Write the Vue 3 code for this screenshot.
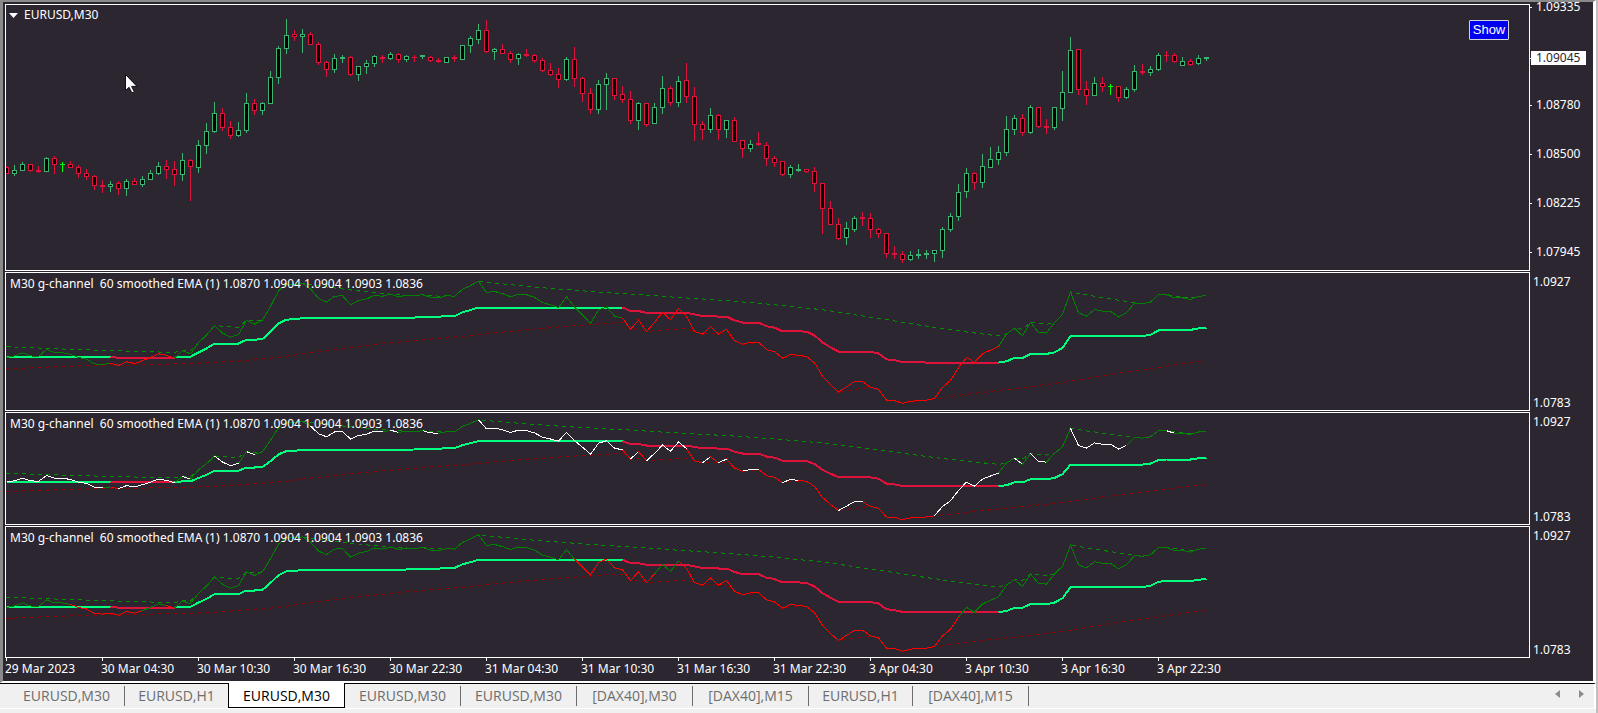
<script setup>
import { ref } from 'vue'

const STEP = 8

// kind (g rise, r fall, d doji), high, body top, body bottom, low
const raw = `r166,167,174,174 g165,170,174,176 g162,164,171,171 r164,164,171,172 r166,170,172,173 g157,158,172,172 r156,158,165,174 d162,164,165,172 r161,164,168,168 r165,167,174,178
r169,173,177,180 r175,176,186,190 r180,185,187,193 g181,184,187,192 r181,183,189,195 g179,181,189,196 r178,181,185,185 g176,179,185,187 g170,173,180,180 g162,166,174,175
r160,166,170,179 r161,169,175,186 g153,160,175,181 r159,160,167,201 g140,145,168,173 g123,131,146,154 g102,113,132,133 r108,113,128,131 r121,127,136,139 g122,130,136,137
g93,103,131,133 r99,103,111,115 g102,103,111,115 g71,77,104,104 g46,48,78,84 g19,35,49,54 r30,34,37,41 g29,34,37,53 r32,34,45,45 r42,44,63,65
r61,62,70,77 g54,58,70,73 g55,57,59,63 r56,57,75,76 g66,66,75,81 g60,63,67,74 g55,56,64,67 r55,57,59,63 g52,54,59,60 r53,54,60,63
g55,56,60,62 r55,57,58,62 g55,55,57,59 r56,57,61,62 r58,60,62,63 g57,57,63,63 r55,57,59,62 g45,45,60,60 g36,38,46,53 g24,30,40,44
r20,30,52,53 g48,49,52,60 r44,49,54,54 r51,53,60,63 g53,54,59,65 r49,54,56,57 r54,55,61,63 r58,60,71,72 r63,70,75,76 r68,74,80,88
g57,59,80,81 r47,59,79,87 r77,78,94,102 r88,93,110,114 g80,84,110,114 g73,78,85,110 r78,78,96,100 r86,94,100,103 r91,99,121,124 g102,103,121,130
r103,103,125,127 g103,107,124,124 g76,88,108,114 r86,88,103,106 g76,81,103,107 r63,80,97,103 r87,96,125,141 r121,124,130,140 g108,115,130,133 r114,115,130,140
g120,120,130,138 r117,120,142,142 r140,140,149,158 g140,144,149,152 r132,143,145,146 r142,145,159,166 r156,158,163,167 r161,161,175,176 g165,167,175,178 g164,169,171,172
r169,169,172,173 r167,171,184,192 r183,183,209,234 r201,208,225,225 r218,224,239,240 g222,228,238,245 g216,218,230,232 r212,217,219,226 r213,218,230,238 r228,229,234,238
r233,233,254,258 r246,253,255,259 r251,254,260,263 g251,255,260,261 g249,254,256,259 g250,253,255,259 g250,250,254,262 g227,229,251,258 g213,216,230,232 g184,192,217,221
g168,173,192,198 r172,173,183,190 g154,166,183,188 g147,159,168,168 g146,152,160,165 g116,129,153,156 g115,118,130,135 r114,118,133,136 g105,107,133,134 r107,107,127,128
r119,126,128,134 g107,107,128,130 g71,92,109,121 g37,50,93,93 r49,49,90,95 r81,89,96,105 g77,83,96,96 r77,83,87,92 d84,86,87,95 r86,86,98,102
g87,89,98,99 g65,71,90,92 r64,71,73,75 g66,69,73,76 g53,55,70,71 r51,55,56,62 r53,55,62,63 g57,61,66,66 r59,61,65,66 g55,58,64,65
g57,57,59,61`

const candles = raw.trim().split(/\s+/).map((s, i) => {
  const [high, top, bottom, low] = s.slice(1).split(',').map((v) => Number(v) - 5)
  return { kind: s[0], high, top, bottom, low, x: i * STEP }
})

// G-channel of the closing prices, length 60, in units of the price chart
const closes = candles.map((c) => (c.kind === 'r' ? c.bottom + 4 : c.top + 5))
const upper = []
const lower = []
let up = 152.5
let lo = 194.5
closes.forEach((c, i) => {
  if (i > 0) {
    const gap = (lo - up) / 60
    up = Math.min(c, up + gap)
    lo = Math.max(c, lo - gap)
  }
  upper.push(up)
  lower.push(lo)
})
const middle = upper.map((u, i) => (u + lower[i]) / 2 - 1)

const midRuns = [['up', 0, 13], ['down', 13, 21], ['up', 21, 77], ['down', 77, 124], ['up', 124, 150]]
const srcRuns = [['rise', 0, 13], ['fall', 13, 21], ['rise', 21, 77], ['fall', 77, 124], ['rise', 124, 150]]
const srcRunsMid = [['rise', 0, 8], ['fall', 8, 17], ['rise', 17, 20], ['fall', 20, 21], ['rise', 21, 71], ['fall', 71, 81], ['rise', 81, 84], ['fall', 84, 119], ['rise', 119, 150]]
const idle = [[0, 12], [14, 21], [22, 23], [26, 29], [30, 31], [38, 47], [48, 49], [52, 54], [59, 77], [78, 79], [80, 85], [87, 88], [89, 90], [92, 94], [97, 99], [104, 107], [116, 124], [126, 127], [128, 130], [133, 140], [145, 146]]
  .map(([a, b]) => ['idle', a, b])

const panels = [
  { id: 'tall', base: 19, scale: 0.5327, runs: srcRuns },
  { id: 'short', base: 15.5, scale: 0.436, runs: [...srcRuns, ...idle] },
  { id: 'last', base: 18, scale: 0.508, runs: srcRunsMid },
].map((p) => {
  const line = (values, a, b) => {
    const pts = []
    for (let i = a; i <= b; i++) pts.push(`${i * STEP + 0.5},${(p.base + (values[i] - 50) * p.scale).toFixed(1)}`)
    return pts.join(' ')
  }
  return {
    id: p.id,
    upper: line(upper, 0, 150),
    lower: line(lower, 0, 150),
    mid: midRuns.map(([c, a, b]) => ({ c, pts: line(middle, a, b) })),
    src: p.runs.map(([c, a, b]) => ({ c, pts: line(closes, a, b) })),
  }
})

const caption = 'M30 g-channel  60 smoothed EMA (1) 1.0870 1.0904 1.0904 1.0903 1.0836'
const prices = ['1.09335', '1.09045', '1.08780', '1.08500', '1.08225', '1.07945']
const times = ['29 Mar 2023', '30 Mar 04:30', '30 Mar 10:30', '30 Mar 16:30', '30 Mar 22:30', '31 Mar 04:30', '31 Mar 10:30', '31 Mar 16:30', '31 Mar 22:30', '3 Apr 04:30', '3 Apr 10:30', '3 Apr 16:30', '3 Apr 22:30']
const tabs = ['EURUSD,M30', 'EURUSD,H1', 'EURUSD,M30', 'EURUSD,M30', 'EURUSD,M30', '[DAX40],M30', '[DAX40],M15', 'EURUSD,H1', '[DAX40],M15']
const active = ref(2)
</script>

<template>
  <main class="terminal">
    <div class="window">
      <section class="row">
        <div class="plot">
          <svg class="canvas price" aria-label="EURUSD price chart">
            <g v-for="c in candles" :key="c.x" :class="c.kind">
              <rect class="solid" :x="c.x" :y="c.high" width="1" :height="c.low - c.high" />
              <rect class="solid" :x="c.x - 2" :y="c.top" width="5" :height="c.bottom - c.top" />
              <rect v-if="c.bottom - c.top > 2" class="hollow" :x="c.x - 1" :y="c.top + 1" width="3" :height="c.bottom - c.top - 2" />
            </g>
          </svg>
          <button class="symbol" type="button">
            <svg width="9" height="5" aria-hidden="true"><path d="M0 0h9L4.5 5z" fill="#fff" /></svg>
            EURUSD,M30
          </button>
          <button class="show" type="button">Show</button>
          <svg class="pointer" width="13" height="20" viewBox="0 0 13 20" aria-hidden="true">
            <path d="M.5 .5v16l3.6-3.2 2.8 5.6 2.4-1.2-2.7-5.3H12z" fill="#fff" stroke="#100c18" />
          </svg>
        </div>
        <ol class="scale prices">
          <li v-for="p in prices" :key="p" :class="{ current: p === '1.09045' }"><span>{{ p }}</span></li>
        </ol>
      </section>

      <section v-for="p in panels" :key="p.id" class="row">
        <div class="plot">
          <svg class="canvas" :class="p.id" aria-label="g-channel indicator">
            <polyline class="upper" :points="p.upper" />
            <polyline class="lower" :points="p.lower" />
            <polyline v-for="(m, i) in p.mid" :key="'m' + i" :class="['mid', m.c]" :points="m.pts" />
            <polyline v-for="(s, i) in p.src" :key="'s' + i" :class="s.c" :points="s.pts" />
          </svg>
          <p class="caption">{{ caption }}</p>
        </div>
        <ol class="scale bounds">
          <li>1.0927</li>
          <li>1.0783</li>
        </ol>
      </section>

      <ol class="times">
        <li v-for="t in times" :key="t">{{ t }}</li>
      </ol>
    </div>

    <nav class="tabs" aria-label="Charts">
      <button
        v-for="(t, i) in tabs"
        :key="i"
        type="button"
        :class="{ active: i === active, before: i === active - 1, hourly: t.endsWith('H1') }"
        @click="active = i"
      ><span>{{ t }}</span></button>
      <div class="arrows">
        <button type="button" aria-label="Scroll left"><svg width="5" height="8"><path d="M5 0v8L0 4z" fill="#8c8c8c" /></svg></button>
        <button type="button" aria-label="Scroll right"><svg width="5" height="8"><path d="M0 0v8l5-4z" fill="#8c8c8c" /></svg></button>
      </div>
    </nav>
  </main>
</template>

<style>
body {
  margin: 0;
  background: #f0f0f0;
}
</style>

<style scoped>
.terminal {
  box-sizing: border-box;
  min-height: 100vh;
  overflow: hidden;
  border-right: 2px solid #c0c0c0;
  background: #f0f0f0;
  font-family: "Noto Sans", "Open Sans", sans-serif;
}
button {
  padding: 0;
  border: 0;
  background: none;
  font: inherit;
  color: inherit;
  text-align: left;
}
ol {
  list-style: none;
  margin: 0;
  padding: 0;
}
.window {
  display: flex;
  flex-direction: column;
  gap: 1px;
  padding: 2px 0 0 2px;
  border-top: 2px solid #8a8a8a;
  border-left: 3px solid #8a8a8a;
  border-right: 3px solid #fff;
  border-bottom: 2px solid #fff;
  background: #2c2630;
  color: #fff;
  font-size: 12px;
  line-height: 14px;
}
.row {
  display: grid;
  grid-template-columns: minmax(0, 1fr) 63px;
}
.plot {
  position: relative;
  border: 1px solid #fff;
}
.canvas {
  display: block;
  width: 100%;
  shape-rendering: crispEdges;
}
.price { height: 265px; }
.tall { height: 137px; }
.short { height: 111px; }
.last { height: 130px; }

.g .solid { fill: #3cb371; }
.r .solid { fill: #dc143c; }
.d .solid { fill: #00ff00; }
.hollow { fill: #000; }

polyline {
  fill: none;
  stroke-width: 1px;
}
.upper { stroke: #009000; stroke-dasharray: 4 4; }
.lower { stroke: #8b0000; stroke-dasharray: 4 4; }
.mid { stroke-width: 2px; }
.up { stroke: #00ff7f; }
.down { stroke: #dc143c; }
.rise { stroke: #008000; }
.fall { stroke: #ff0000; }
.idle { stroke: #fff; }

.symbol {
  position: absolute;
  top: 3px;
  left: 3px;
  display: flex;
  align-items: center;
  gap: 6px;
}
.caption {
  position: absolute;
  top: 4px;
  left: 4px;
  margin: 0;
  white-space: pre;
}
.show {
  position: absolute;
  top: 15px;
  right: 20px;
  width: 40px;
  height: 20px;
  border: 1px solid #d3d3d3;
  border-radius: 1px;
  background: #0000f0;
  font-family: "Liberation Sans", sans-serif;
  font-size: 13px;
  text-align: center;
}
.pointer {
  position: absolute;
  top: 69px;
  left: 119px;
}
.scale {
  display: flex;
  flex-direction: column;
  justify-content: space-between;
}
.prices {
  margin: -4px 0 12px;
}
.prices li {
  display: flex;
  align-items: center;
}
.prices li::before {
  content: "";
  width: 2px;
  height: 1px;
  background: #fff;
}
.prices span {
  padding: 0 4px;
}
.prices .current {
  margin: 2px 0 -2px;
}
.prices .current::before {
  width: 1px;
}
.prices .current span {
  padding: 0 6px 0 5px;
  background: #fff;
  color: #2c2630;
}
.bounds {
  padding: 3px 0 1px 3px;
}
.times {
  display: flex;
  height: 23px;
  margin-top: -1px;
}
.times li {
  position: relative;
  flex: 0 0 96px;
  padding-top: 4px;
  white-space: nowrap;
}
.times li::before {
  content: "";
  position: absolute;
  top: 0;
  left: 1px;
  width: 1px;
  height: 3px;
  background: #fff;
}
.tabs {
  display: flex;
  height: 24px;
  padding-left: 9px;
  border-top: 1px solid #000;
  border-bottom: 1px solid #fff;
  border-right: 2px solid #fff;
  color: #6d6d6d;
  font-family: "Open Sans", "Noto Sans", sans-serif;
  font-size: 14px;
}
.tabs > button {
  display: flex;
  padding: 2px 0;
}
.tabs > button > span {
  box-sizing: border-box;
  min-width: 116px;
  border-right: 1px solid #6d6d6d;
  line-height: 19px;
  text-align: center;
}
.tabs > .hourly > span {
  min-width: 104px;
}
.tabs > .before > span {
  border-right-color: transparent;
}
.tabs > .active {
  margin: -1px 0 0 -1px;
  padding: 3px 0 1px;
  border: 1px solid #000;
  border-top: 0;
  background: #fff;
  color: #000;
}
.tabs > .active > span {
  min-width: 115px;
  border: 0;
}
.arrows {
  display: flex;
  align-items: center;
  gap: 19px;
  margin-left: auto;
  padding: 0 10px 4px 0;
  line-height: 8px;
}
.arrows svg {
  display: block;
}
</style>
